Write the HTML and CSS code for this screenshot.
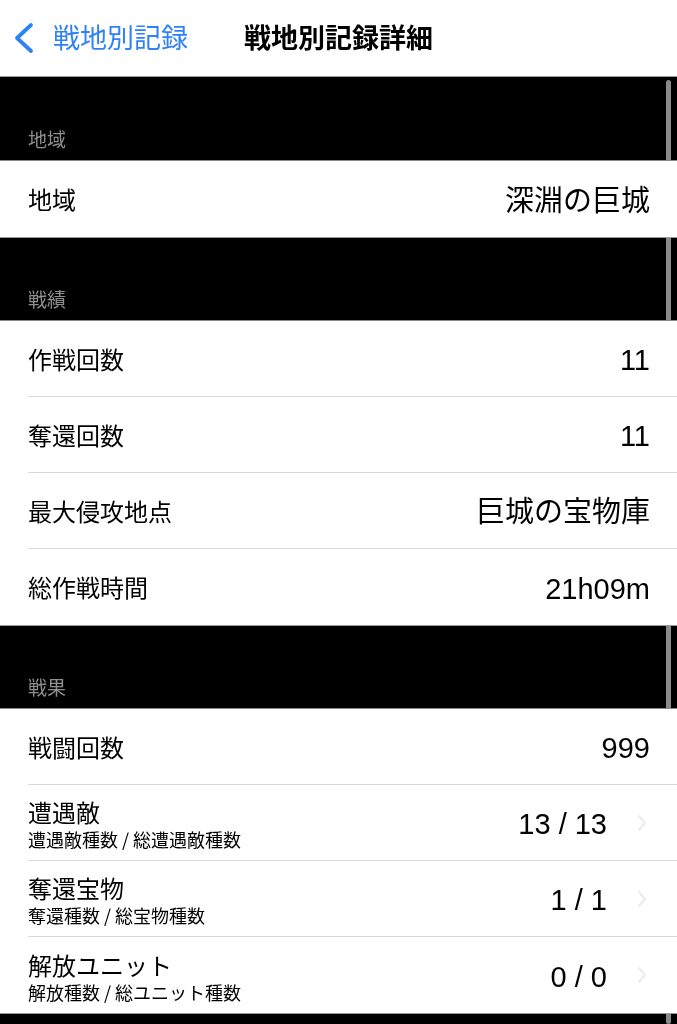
FILE: index.html
```html
<!DOCTYPE html>
<html lang="ja">
<head>
<meta charset="utf-8">
<title>戦地別記録詳細</title>
<link rel="stylesheet" href="styles.css">
</head>
<body>
<div class="page">
  <header class="nav">
    <div class="back">
      <svg class="back-icon" width="24" height="32" viewBox="0 0 24 32"><path d="M19 3 L5 16 L19 29" fill="none" stroke="#2f82f5" stroke-width="3.8" stroke-linecap="round" stroke-linejoin="round"/></svg>
      <span class="back-text">戦地別記録</span>
    </div>
    <div class="title">戦地別記録詳細</div>
  </header>

  <div class="section-head first"><span>地域</span></div>
  <div class="row"><div class="row-in last"><span class="label">地域</span><span class="value">深淵の巨城</span></div></div>

  <div class="section-head"><span>戦績</span></div>
  <div class="row"><div class="row-in"><span class="label">作戦回数</span><span class="value">11</span></div></div>
  <div class="row"><div class="row-in"><span class="label">奪還回数</span><span class="value">11</span></div></div>
  <div class="row"><div class="row-in"><span class="label">最大侵攻地点</span><span class="value">巨城の宝物庫</span></div></div>
  <div class="row"><div class="row-in last"><span class="label">総作戦時間</span><span class="value">21h09m</span></div></div>

  <div class="section-head"><span>戦果</span></div>
  <div class="row"><div class="row-in"><span class="label">戦闘回数</span><span class="value">999</span></div></div>
  <div class="row"><div class="row-in link"><div class="labels"><span class="label">遭遇敵</span><span class="sub">遭遇敵種数 / 総遭遇敵種数</span></div><span class="value">13 / 13</span><svg class="chev" width="12" height="18" viewBox="0 0 12 18"><path d="M3 2 L9 9 L3 16" fill="none" stroke="#ebebeb" stroke-width="2" stroke-linecap="round" stroke-linejoin="round"/></svg></div></div>
  <div class="row"><div class="row-in link"><div class="labels"><span class="label">奪還宝物</span><span class="sub">奪還種数 / 総宝物種数</span></div><span class="value">1 / 1</span><svg class="chev" width="12" height="18" viewBox="0 0 12 18"><path d="M3 2 L9 9 L3 16" fill="none" stroke="#ebebeb" stroke-width="2" stroke-linecap="round" stroke-linejoin="round"/></svg></div></div>
  <div class="row"><div class="row-in link last"><div class="labels"><span class="label">解放ユニット</span><span class="sub">解放種数 / 総ユニット種数</span></div><span class="value">0 / 0</span><svg class="chev" width="12" height="18" viewBox="0 0 12 18"><path d="M3 2 L9 9 L3 16" fill="none" stroke="#ebebeb" stroke-width="2" stroke-linecap="round" stroke-linejoin="round"/></svg></div></div>

  <div class="section-head tail"></div>

  <div class="scroll-indicator"></div>
</div>
</body>
</html>
```
FILE: styles.css
```css
html, body {
  margin: 0;
  padding: 0;
  background: #fff;
}
body {
  font-family: "Liberation Sans", "Noto Sans CJK JP", sans-serif;
  color: #000;
  width: 677px;
  height: 1024px;
  overflow: hidden;
}
.page {
  position: relative;
  width: 677px;
  height: 1024px;
  overflow: hidden;
}
.nav {
  position: relative;
  height: 76px;
  display: flex;
  align-items: center;
  justify-content: center;
  box-sizing: border-box;
}
.back {
  position: absolute;
  left: 12px;
  top: 0;
  height: 76px;
  display: flex;
  align-items: center;
}
.back-icon {
  display: block;
  margin-top: -1px;
}
.back-text {
  margin-left: 17px;
  font-size: 27px;
  line-height: 30px;
  color: #2f82f5;
  font-family: "Noto Sans CJK JP", sans-serif;
  margin-top: -2px;
}
.title {
  font-family: "Noto Sans CJK JP", sans-serif;
  font-weight: 700;
  font-size: 27px;
  line-height: 30px;
  margin-top: -2px;
}
.section-head {
  height: 84px;
  box-sizing: border-box;
  background: #000;
  border-top: 1px solid #9a9a9a;
  border-bottom: 1px solid #8a8a8a;
  display: flex;
  align-items: flex-end;
  padding: 0 28px 9px;
}
.section-head.first {
  height: 85px;
}
.section-head span {
  font-family: "Noto Sans CJK JP", sans-serif;
  font-size: 19px;
  line-height: 24px;
  color: #8e8e8e;
}
.section-head.tail {
  height: 20px;
}
.row {
  height: 76px;
  padding-left: 28px;
  box-sizing: border-box;
}
.row-in {
  height: 76px;
  box-sizing: border-box;
  border-bottom: 1px solid #d9d9d9;
  display: flex;
  align-items: center;
  padding-right: 27px;
}
.row-in.last {
  border-bottom: none;
}
.label {
  font-family: "Noto Sans CJK JP", sans-serif;
  font-size: 24px;
  line-height: 30px;
}
.value {
  margin-left: auto;
  font-size: 29px;
  line-height: 32px;
  padding-top: 3px;
}
.labels {
  display: flex;
  flex-direction: column;
  margin-top: 3px;
}
.labels .label {
  line-height: 30px;
}
.sub {
  font-family: "Noto Sans CJK JP", sans-serif;
  font-size: 18px;
  line-height: 24px;
}
.row-in.link {
  padding-right: 29px;
}
.chev {
  display: block;
  margin-left: 29px;
}
.scroll-indicator {
  position: absolute;
  left: 666px;
  top: 80px;
  bottom: 0;
  width: 5px;
  border-radius: 3px;
  background: #8a8a8a;
  mix-blend-mode: lighten;
}
```
